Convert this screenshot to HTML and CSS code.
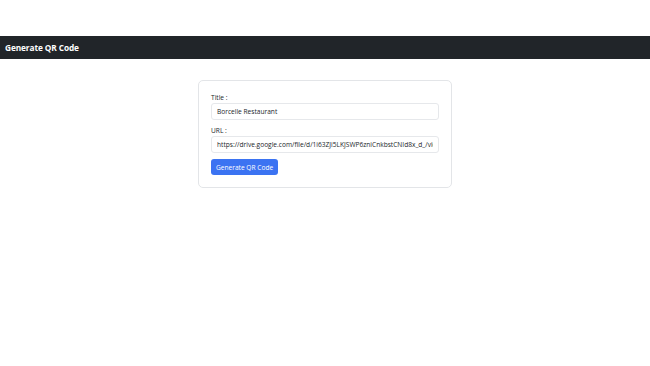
FILE: index.html
```html
<!DOCTYPE html>
<html lang="en">
<head>
    <meta charset="UTF-8">
    <meta name="viewport" content="width=device-width, initial-scale=1.0">
    <title>Generate QR Code</title>
    <link rel="stylesheet" href="styles.css">
</head>
<body>
    <nav class="navbar">
        <span class="brand">Generate QR Code</span>
    </nav>
    <div class="container">
        <form class="card">
            <div class="field">
                <label for="title">Title :</label>
                <input type="text" id="title" value="Borcelle Restaurant">
            </div>
            <div class="field">
                <label for="url">URL :</label>
                <input type="text" id="url" value="https://drive.google.com/file/d/1i63ZJi5LKJSWP6zniCnkbstCNId8x_d_/view">
            </div>
            <button type="button" class="btn">Generate QR Code</button>
        </form>
    </div>
</body>
</html>
```

FILE: styles.css
```css
body {
    margin: 0;
    padding: 0;
    font-family: "Open Sans", "Noto Sans", sans-serif;
    color: #212529;
    background: #fff;
}
.navbar {
    margin-top: 36px;
    height: 23px;
    background: #212529;
    display: flex;
    align-items: center;
    padding: 0 5px;
}
.brand {
    color: #fff;
    font-weight: 700;
    font-size: 8.3px;
    letter-spacing: -0.1px;
}
.container {
    display: flex;
    justify-content: center;
    padding-top: 21px;
}
.card {
    width: 254px;
    box-sizing: border-box;
    border: 1px solid #e3e5e8;
    border-radius: 5px;
    padding: 12px 12px 12px 12px;
    margin: 0;
    font-size: 6.6px;
}
.field {
    display: flex;
    flex-direction: column;
    gap: 1px;
    margin-bottom: 6px;
}
.field label {
    display: block;
    line-height: 9px;
}
.field input {
    display: block;
    width: 100%;
    height: 17px;
    box-sizing: border-box;
    border: 1px solid #e6e8eb;
    border-radius: 3px;
    padding: 0 5px;
    font-family: inherit;
    font-size: 6.6px;
    color: #212529;
    outline: none;
}
.btn {
    display: block;
    height: 16px;
    padding: 0 5px;
    background: #3b73f2;
    border: none;
    border-radius: 3px;
    color: #fff;
    font-family: inherit;
    font-size: 6.6px;
}
```
